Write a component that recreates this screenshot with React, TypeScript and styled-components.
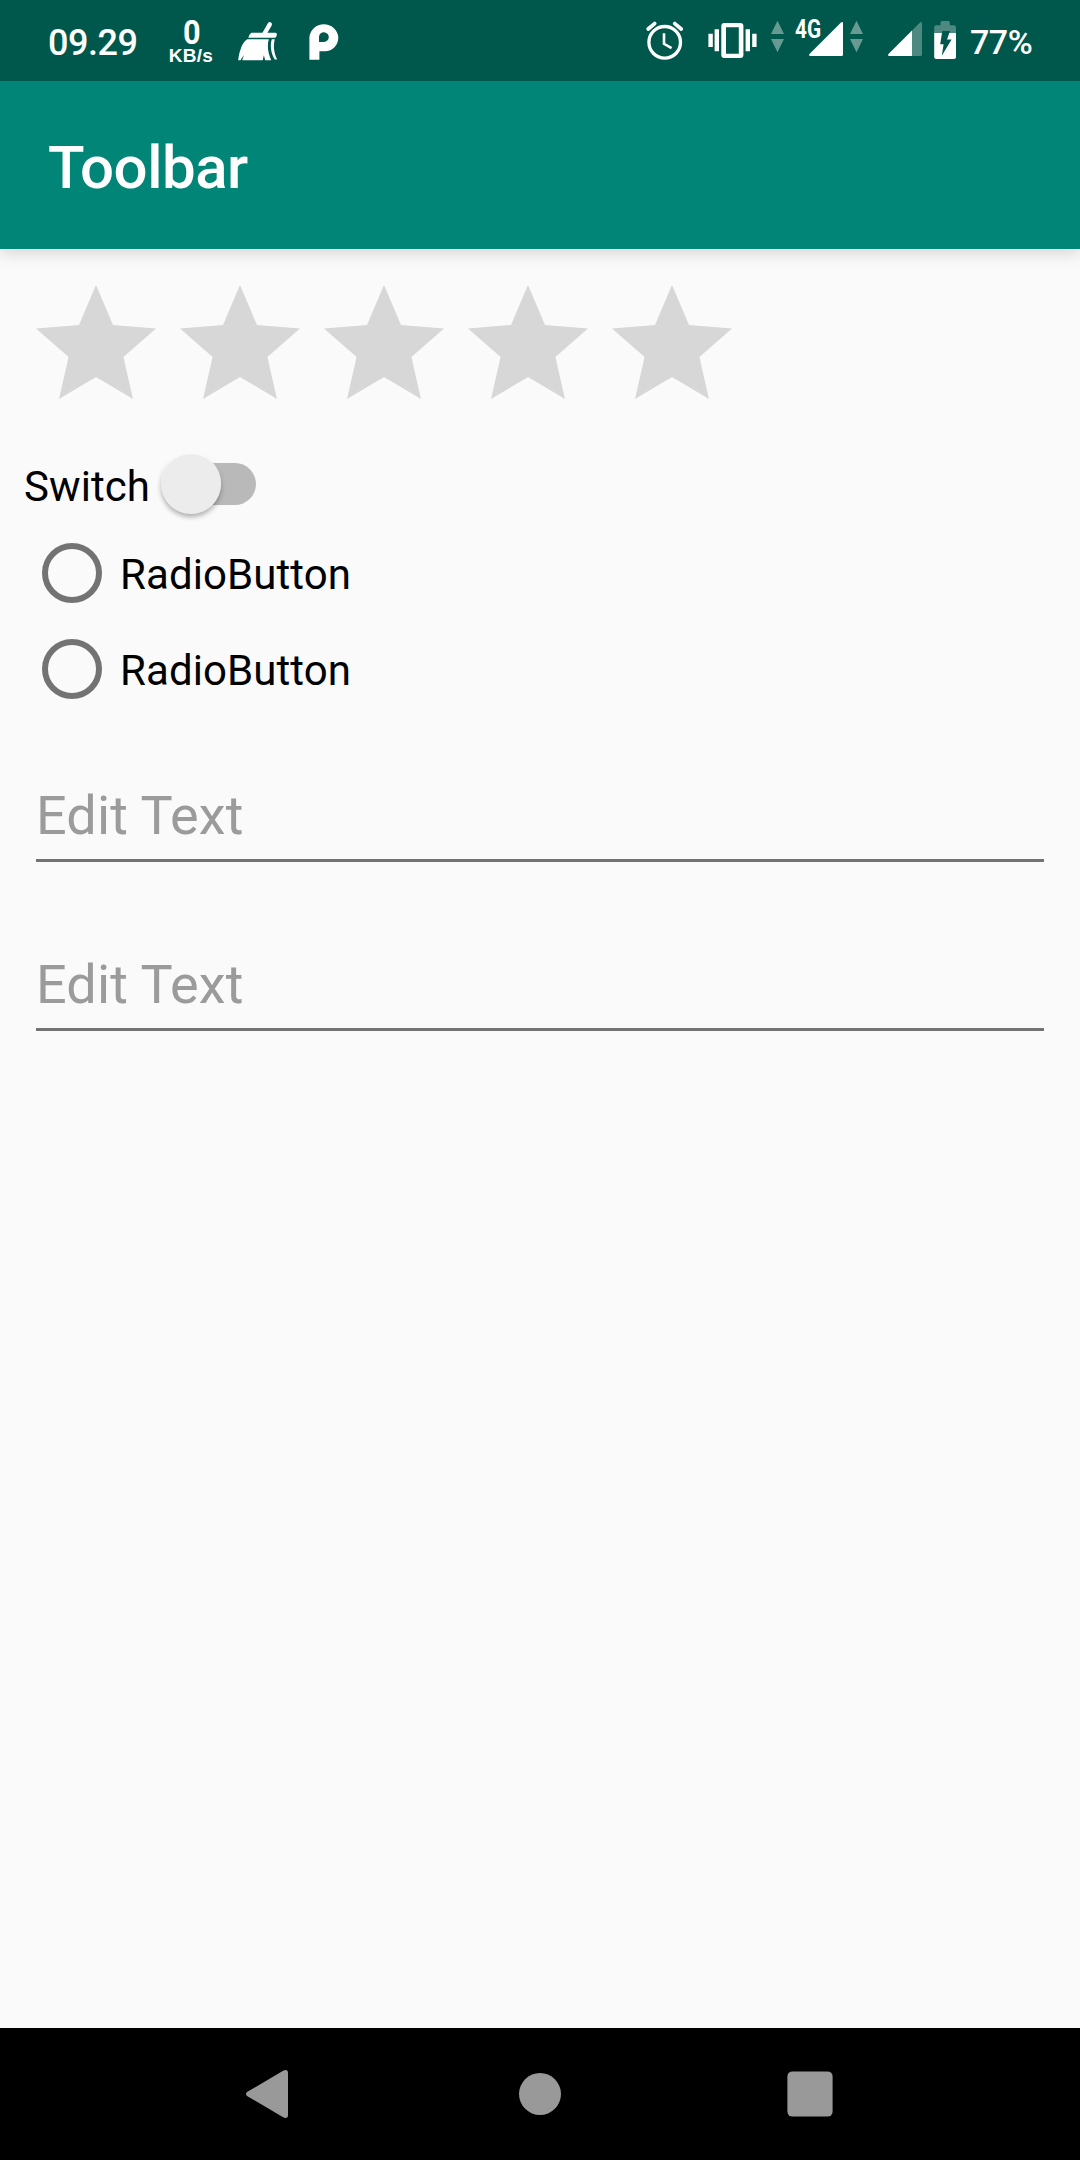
import React from "react";
import styled, { createGlobalStyle } from "styled-components";

const GlobalStyle = createGlobalStyle`
  body { margin: 0; background: #fafafa; }
  * { box-sizing: border-box; }
`;

const Screen = styled.div`
  width: 1080px;
  height: 2160px;
  display: flex;
  flex-direction: column;
  background: #fafafa;
  font-family: Roboto, "Liberation Sans", sans-serif;
  color: #000;
  overflow: hidden;
`;

const StatusBar = styled.header`
  flex: none;
  z-index: 1;
  height: 81px;
  display: flex;
  justify-content: space-between;
  padding: 0 48px;
  background: #00574b;
  color: #fff;
`;

const StatusGroup = styled.div`
  display: flex;
  height: 81px;
`;

const StatusIcon = styled.svg<{ $gap: number }>`
  flex: none;
  display: block;
  height: 81px;
  margin-left: ${(p) => p.$gap}px;
`;

const Clock = styled.span`
  width: 90px;
  padding-top: 3px;
  font-size: 36px;
  font-weight: 500;
  letter-spacing: -0.5px;
  line-height: 80px;
  white-space: nowrap;
`;

const NetSpeed = styled.div`
  width: 46px;
  margin-left: 30px;
  padding-top: 18px;
  display: flex;
  flex-direction: column;
  align-items: center;
  font-family: "Liberation Sans", sans-serif;
  font-weight: 700;
`;

const SpeedValue = styled.span`
  padding-left: 2px;
  font-family: Roboto, sans-serif;
  font-size: 34px;
  font-weight: 700;
  line-height: 28px;
  transform: scaleX(0.9);
`;

const SpeedUnit = styled.span`
  font-size: 19px;
  letter-spacing: 0.3px;
  line-height: 20px;
`;

const NetworkLabel = styled.span`
  width: 52px;
  margin: 0 -52px 0 8px;
  padding-top: 15px;
  font-size: 26px;
  font-weight: 700;
  line-height: 28px;
  transform: scaleX(0.8);
  transform-origin: left;
`;

const Percent = styled.span`
  width: 62px;
  margin-left: 12px;
  padding-top: 2px;
  font-size: 34px;
  font-weight: 500;
  letter-spacing: -0.5px;
  line-height: 80px;
  white-space: nowrap;
`;

const Toolbar = styled.div`
  flex: none;
  height: 168px;
  padding: 5px 48px 0;
  display: flex;
  align-items: center;
  background: #008577;
  box-shadow: 0 3px 16px rgba(0, 0, 0, 0.17);
`;

const Title = styled.h1`
  margin: 0;
  font-size: 60px;
  font-weight: 500;
  letter-spacing: -0.48px;
  line-height: 70px;
  color: #fff;
`;

const Content = styled.main`
  flex: 1;
  display: flex;
  flex-direction: column;
`;

const RatingBar = styled.div`
  display: flex;
  gap: 24px;
  padding: 36px 36px 45px;
`;

const Star = styled.svg`
  display: block;
  width: 120px;
  height: 114px;
  fill: #d7d7d7;
`;

const SwitchRow = styled.label`
  height: 80px;
  display: flex;
  align-items: center;
  gap: 11px;
  margin-bottom: 1px;
  padding-left: 24px;
`;

const Label = styled.span<{ $drop: number }>`
  padding-top: ${(p) => p.$drop}px;
  font-size: 42px;
  letter-spacing: 0.08px;
  line-height: 50px;
`;

const Track = styled.span`
  width: 86px;
  height: 42px;
  display: flex;
  align-items: center;
  margin-left: 9px;
  border-radius: 21px;
  background: #b9b9b9;
`;

const Thumb = styled.span`
  flex: none;
  width: 60px;
  height: 60px;
  margin-left: -9px;
  border-radius: 50%;
  background: #ececec;
  box-shadow: 0 -1px 1px rgba(255, 255, 255, 0.7), 0 3px 5px rgba(0, 0, 0, 0.3);
`;

const RadioRow = styled.label`
  height: 96px;
  display: flex;
  align-items: center;
  gap: 18px;
  padding-left: 42px;
`;

const RadioCircle = styled.span`
  width: 60px;
  height: 60px;
  border: 6px solid #737373;
  border-radius: 50%;
`;

const Field = styled.div`
  height: 169px;
  margin: 0 36px;
  padding-bottom: 10px;
  display: flex;
  flex-direction: column;
  justify-content: flex-end;
  border-bottom: 3px solid #737373;
`;

const FirstField = styled(Field)`
  height: 145px;
`;

const Hint = styled.span`
  font-size: 54px;
  letter-spacing: 0.12px;
  line-height: 66px;
  color: #9b9b9b;
`;

const NavBar = styled.nav`
  flex: none;
  height: 132px;
  display: flex;
  justify-content: center;
  align-items: center;
  gap: 210px;
  background: #000;
`;

const NavIcon = styled.svg`
  display: block;
  width: 60px;
  height: 60px;
  fill: #999;
`;

const DataArrows = ({ gap }: { gap: number }) => (
  <StatusIcon $gap={gap} width="18" viewBox="0 0 18 81" fill="#fff" fillOpacity="0.4">
    <path d="M8.5 20.7 15 34H2zM2 39h13L8.5 52.3z" />
  </StatusIcon>
);

export default function App() {
  return (
    <>
      <GlobalStyle />
      <Screen>
        <StatusBar>
          <StatusGroup>
            <Clock>09.29</Clock>
            <NetSpeed>
              <SpeedValue>0</SpeedValue>
              <SpeedUnit>KB/s</SpeedUnit>
            </NetSpeed>
            <StatusIcon $gap={22} width="44" viewBox="236 0 44 81" fill="#fff">
              <path d="M269.8 24.3 264.5 33.5" stroke="#fff" strokeWidth="4.4" strokeLinecap="round" />
              <path d="M251.5 32.8H275.5Q277.3 33 276.8 35L276.3 36.6Q275.8 37.8 274.5 37.8H248.3Q249.3 34 251.5 32.8z" />
              <path d="M247.2 39.3H268.8C267.2 45 267.5 52 271.2 60.2H265.2L263.8 55.3 262.8 60.2H242.2L244 55 240.4 60.2H238.2C238.8 55 241 43 247.2 39.3z" />
              <path d="M271.8 39.3H274.8C273.3 45 273.5 52 277.2 59.6H274.8C271 54 269.8 45 271.8 39.3z" />
            </StatusIcon>
            <StatusIcon $gap={28} width="32" viewBox="308 0 32 81" fill="#fff">
              <path
                fillRule="evenodd"
                d="M309.4 59.7V37.3A14.5 14.3 0 0 1 338.3 37.3C338.3 45.5 332.5 51.2 325 51.2H319.4V59.7zM319 42V37A4.9 4.9 0 1 1 323.9 42z"
              />
            </StatusIcon>
          </StatusGroup>
          <StatusGroup>
            <StatusIcon $gap={0} width="42" viewBox="644 0 42 81" fill="none" stroke="#fff">
              <circle cx="664.7" cy="42.3" r="15.8" strokeWidth="3.3" />
              <path d="M664 33.3V43.8L671.6 48.2" strokeWidth="2.6" />
              <path d="M648.2 29 654.6 23.6M674.8 23.6 681.2 29" strokeWidth="3.8" strokeLinecap="round" />
            </StatusIcon>
            <StatusIcon $gap={20} width="54" viewBox="706 0 54 81" fill="#fff">
              <path
                fillRule="evenodd"
                d="M724.3 23H740.4Q743.4 23 743.4 26V55Q743.4 58 740.4 58H724.3Q721.3 58 721.3 55V26Q721.3 23 724.3 23zM726 27.2V53.7H738.8V27.2z"
              />
              <path d="M714.6 29.3H719V51.3H714.6zM708.4 33.8H712.8V47H708.4zM745.6 29.3H750V51.3H745.6zM752.2 33.8H756.6V47H752.2z" />
            </StatusIcon>
            <DataArrows gap={9} />
            <NetworkLabel>4G</NetworkLabel>
            <StatusIcon $gap={11} width="40" viewBox="806 0 40 81" fill="#fff">
              <path d="M809.5 54 841 22.5Q843 21.3 843 23.5V54.5Q843 56 841.5 56H810.3Q808.2 55.7 809.5 54z" />
            </StatusIcon>
            <DataArrows gap={2} />
            <StatusIcon $gap={20} width="38" viewBox="886 0 38 81" fill="#fff">
              <path fillOpacity="0.3" d="M912 30.5 920 22.5Q922 21.3 922 23.5V54.5Q922 56 920.5 56H912z" />
              <path d="M912 30.5V56H889.3Q887.2 55.7 888.5 54z" />
            </StatusIcon>
            <StatusIcon $gap={8} width="26" viewBox="932 0 26 81">
              <path
                fill="#fff"
                fillOpacity="0.3"
                d="M934.2 33V27.5Q934.2 25.3 936.4 25.3H940.5V22.5Q940.5 21 942 21H948.3Q949.8 21 949.8 22.5V25.3H953.8Q956 25.3 956 27.5V33z"
              />
              <path fill="#fff" d="M934.2 33H956V57Q956 59 954 59H936.2Q934.2 59 934.2 57z" />
              <path fill="#00574b" d="M942.3 31H950L947 39.6H951.6L941.8 55.8 943.6 44.2H940.2z" />
            </StatusIcon>
            <Percent>77%</Percent>
          </StatusGroup>
        </StatusBar>

        <Toolbar>
          <Title>Toolbar</Title>
        </Toolbar>

        <Content>
          <RatingBar>
            {[1, 2, 3, 4, 5].map((n) => (
              <Star key={n} viewBox="0 0 120 114">
                <path d="M60 0 77 40 120 43.4 87.4 72 97 114 60 92 23 114 32.6 72 0 43.4 43 40z" />
              </Star>
            ))}
          </RatingBar>
          <SwitchRow>
            <Label $drop={5}>Switch</Label>
            <Track>
              <Thumb />
            </Track>
          </SwitchRow>
          <RadioRow>
            <RadioCircle />
            <Label $drop={3}>RadioButton</Label>
          </RadioRow>
          <RadioRow>
            <RadioCircle />
            <Label $drop={3}>RadioButton</Label>
          </RadioRow>
          <FirstField>
            <Hint>Edit Text</Hint>
          </FirstField>
          <Field>
            <Hint>Edit Text</Hint>
          </Field>
        </Content>

        <NavBar>
          <NavIcon viewBox="240 2064 60 60">
            <path d="M247 2092 283.5 2070.5Q288 2069 288 2073V2115Q288 2119 283.5 2117.5L247 2096Q245 2094 247 2092z" />
          </NavIcon>
          <NavIcon viewBox="510 2064 60 60">
            <circle cx="540" cy="2094" r="21" />
          </NavIcon>
          <NavIcon viewBox="780 2064 60 60">
            <rect x="787.4" y="2071.4" width="45.2" height="45.2" rx="5" />
          </NavIcon>
        </NavBar>
      </Screen>
    </>
  );
}
